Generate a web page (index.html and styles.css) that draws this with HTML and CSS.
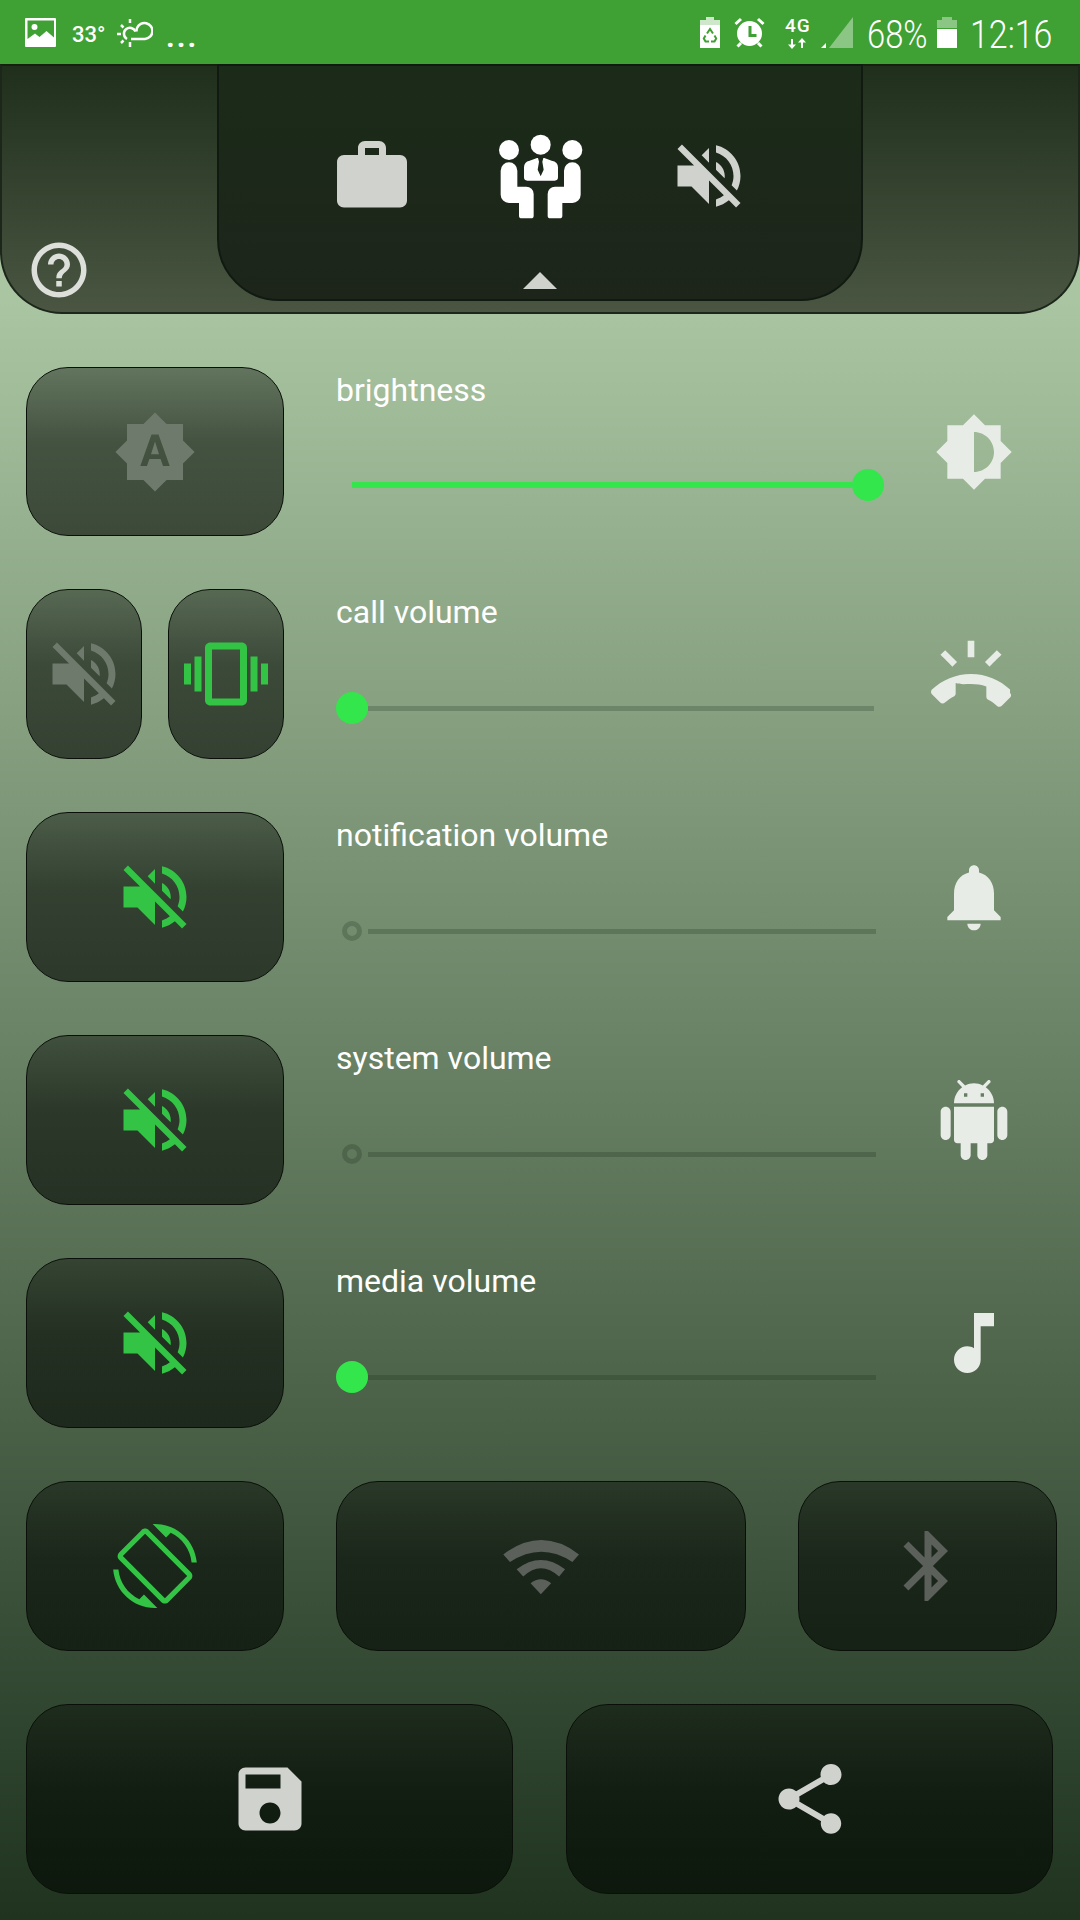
FILE: index.html
```html
<!DOCTYPE html>
<html lang="en">
<head>
  <meta charset="UTF-8">
  <meta name="viewport" content="width=device-width, initial-scale=1.0">
  <title>Sound profiles</title>
  <link rel="stylesheet" href="styles.css">
</head>
<body>
  <!-- Status bar -->
  <div class="status-bar">
    <div class="status-left">
      <svg class="st-image" viewBox="0 0 31 29"><path fill="#fff" fill-rule="evenodd" d="M1 0h29a1 1 0 0 1 1 1v27a1 1 0 0 1-1 1H1a1 1 0 0 1-1-1V1a1 1 0 0 1 1-1zm1.500 2.500V21l7.500-5.500 4.500 3.500 7-6 7.500 6.500V2.500zM9.500 6a3 3 0 1 1 0 6 3 3 0 0 1 0-6z"/></svg>
      <span class="temp">33°</span>
      <svg class="st-weather" viewBox="0 0 36 28" fill="none" stroke="#fff" stroke-width="2.500"><path d="M14 20h14a8 8 0 1 0-8-11c-.5 1-.5 2-.5 3.500"/><path d="M18.500 12.500A6 6 0 1 0 10 20"/><path d="M13 0v4M13 23v5M0 15h4M4 6l2.500 2.500M6.500 21.500L4 24"/></svg>
      <span class="dots">...</span>
    </div>
    <div class="status-right">
      <svg class="st-saver" viewBox="0 0 20 31"><path fill="#fff" fill-opacity=".75" d="M6 0h8v3h6v5H0V3h6z"/><path fill="#fff" d="M0 8h20v23H0z"/><g fill="none" stroke="#3fa033" stroke-width="2"><path d="M7 16.500l3-4.500 3 4.500"/><path d="M5.500 18.500L3.800 21.500l1.700 3h3.500"/><path d="M14.500 18.500l1.700 3-1.700 3H11"/></g></svg>
      <svg class="st-alarm" viewBox="0 0 31 31"><circle cx="15.500" cy="16.500" r="12.500" fill="#fff"/><g stroke="#fff" stroke-width="3" fill="none"><path d="M1.500 7L7 2M29.500 7L24 2M7 26l-3.500 3.500M24 26l3.500 3.500"/></g><path d="M14.500 9h3v8h5v3h-8z" fill="#3fa033"/></svg>
      <div class="st-net">
        <span class="net-label">4G</span>
        <svg class="net-arrows" viewBox="0 0 18 11"><path fill="#fff" d="M4 11L0 6.500h3V1h2v5.500h3zM14 0l4 4.500h-3V10h-2V4.500h-3z"/></svg>
      </div>
      <svg class="st-signal" viewBox="0 0 32 31"><path fill="#fff" fill-opacity=".4" d="M32 0v31H8z"/><path fill="#fff" d="M0 31l5-5v5z"/></svg>
      <span class="cond pct">68%</span>
      <svg class="st-battery" viewBox="0 0 20 31"><path fill="#fff" fill-opacity=".4" d="M5 0h10v3h5v8H0V3h5z"/><path fill="#fff" d="M0 12h20v19H0z"/></svg>
      <span class="cond clock">12:16</span>
    </div>
  </div>

  <!-- Profile header -->
  <div class="header">
    <svg class="help-icon" viewBox="0 0 24 24"><path d="M11 18h2v-2h-2v2zm1-16C6.480 2 2 6.480 2 12s4.480 10 10 10 10-4.480 10-10S17.520 2 12 2zm0 18c-4.410 0-8-3.590-8-8s3.590-8 8-8 8 3.590 8 8-3.590 8-8 8zm0-14c-2.210 0-4 1.790-4 4h2c0-1.100.9-2 2-2s2 .9 2 2c0 2-3 1.750-3 5h2c0-2.250 3-2.500 3-5 0-2.210-1.790-4-4-4z"/></svg>
    <div class="profile-tab">
      <div class="profile-icons">
        <svg class="profile-icon dim" viewBox="0 0 24 24"><path d="M20 6h-4V4c0-1.110-.89-2-2-2h-4c-1.110 0-2 .89-2 2v2H4c-1.110 0-1.990.89-1.990 2L2 19c0 1.110.89 2 2 2h16c1.110 0 2-.89 2-2V8c0-1.110-.89-2-2-2zm-6 0h-4V4h4v2z"/></svg>
        <svg class="meeting-icon" viewBox="85 25 255 255"><g fill="#fff">
          <circle cx="118" cy="73" r="30"/><circle cx="308" cy="73" r="30"/><circle cx="213" cy="57" r="30"/>
          <path d="M93 135a25 25 0 0 1 50 0v48h27a22 22 0 0 1 22 22v65a8 8 0 0 1-8 8h-28a8 8 0 0 1-8-8v-38h-30a25 25 0 0 1-25-25z"/>
          <path d="M333 135a25 25 0 0 0-50 0v48h-27a22 22 0 0 0-22 22v65a8 8 0 0 0 8 8h28a8 8 0 0 0 8-8v-38h30a25 25 0 0 0 25-25z"/>
          <path d="M163 155v-30q0-17 17-20l22-8h22l22 8q19 3 19 20v30q0 10-10 10h-82q-10 0-10-10z"/>
        </g><path fill="#1c291a" d="M205 97h16l-3 11 4 24-9 20-9-20 4-24z"/></svg>
        <svg class="profile-icon dim" viewBox="0 0 24 24"><use href="#mute"/></svg>
      </div>
      <div class="tab-arrow"></div>
    </div>
  </div>

  <svg class="defs"><defs><path id="mute" d="M16.500 12c0-1.770-1.020-3.290-2.500-4.030v2.210l2.450 2.450c.03-.2.050-.41.050-.63zm2.500 0c0 .94-.2 1.820-.54 2.640l1.510 1.510C20.630 14.910 21 13.500 21 12c0-4.280-2.990-7.860-7-8.770v2.060c2.890.86 5 3.540 5 6.710zM4.270 3L3 4.270 7.730 9H3v6h4l5 5v-6.730l4.250 4.250c-.67.52-1.420.93-2.250 1.180v2.060c1.380-.31 2.630-.95 3.690-1.810L19.730 21 21 19.730l-9-9L4.270 3zM12 4L9.910 6.090 12 8.180V4z"/></defs></svg>

  <div class="controls">
    <!-- Brightness -->
    <div class="row">
      <div class="btn-group">
        <div class="btn"><svg class="icon grey" viewBox="0 0 24 24"><path d="M10.850 12.650h2.300L12 9l-1.150 3.650zM20 8.690V4h-4.690L12 .69 8.690 4H4v4.690L.69 12 4 15.310V20h4.690L12 23.310 15.310 20H20v-4.690L23.310 12 20 8.690zM14.300 16l-.7-2h-3.200l-.7 2H7.800L11 7h2l3.200 9h-1.900z"/></svg></div>
      </div>
      <div class="slider-col">
        <div class="label">brightness</div>
        <div class="slider full">
          <div class="fill"></div>
          <div class="thumb"></div>
        </div>
      </div>
      <svg class="side-icon" viewBox="0 0 24 24"><path d="M20 15.310L23.310 12 20 8.690V4h-4.690L12 .69 8.690 4H4v4.690L.69 12 4 15.310V20h4.690L12 23.310 15.310 20H20v-4.690zM12 18V6c3.310 0 6 2.690 6 6s-2.690 6-6 6z"/></svg>
    </div>

    <!-- Call volume -->
    <div class="row">
      <div class="btn-group">
        <div class="btn"><svg class="icon grey" viewBox="0 0 24 24"><use href="#mute"/></svg></div>
        <div class="btn"><svg class="icon green" viewBox="0 0 24 24"><path d="M0 15h2V9H0v6zm3 2h2V7H3v10zm19-8v6h2V9h-2zm-3 8h2V7h-2v10zM16.500 3h-9C6.670 3 6 3.670 6 4.500v15c0 .83.67 1.500 1.500 1.500h9c.83 0 1.500-.67 1.500-1.500v-15c0-.83-.67-1.500-1.500-1.500zM16 19H8V5h8v14z"/></svg></div>
      </div>
      <div class="slider-col">
        <div class="label">call volume</div>
        <div class="slider">
          <div class="thumb"></div>
          <div class="track"></div>
        </div>
      </div>
      <svg class="side-icon shift" viewBox="0 0 24 24"><path d="M23.710 16.670C20.660 13.780 16.540 12 12 12 7.460 12 3.340 13.780.29 16.670c-.18.18-.29.43-.29.71 0 .28.11.53.29.71l2.480 2.480c.18.18.43.29.71.29.27 0 .52-.11.7-.28.79-.74 1.690-1.360 2.660-1.850.33-.16.56-.5.56-.9v-3.100C8.850 15.250 10.400 15 12 15c1.600 0 3.150.25 4.600.72v3.100c0 .39.23.74.56.9.98.49 1.870 1.120 2.670 1.850.18.18.43.28.7.28.28 0 .53-.11.71-.29l2.480-2.480c.18-.18.29-.43.29-.71 0-.28-.12-.52-.3-.7zM21.160 6.260l-1.410-1.410-3.560 3.550 1.410 1.410s3.450-3.520 3.560-3.550zM13 2h-2v5h2V2zM6.400 9.810L7.810 8.400 4.260 4.840 2.840 6.260c.11.03 3.560 3.550 3.560 3.550z"/></svg>
    </div>

    <!-- Notification volume -->
    <div class="row">
      <div class="btn-group">
        <div class="btn"><svg class="icon green" viewBox="0 0 24 24"><use href="#mute"/></svg></div>
      </div>
      <div class="slider-col">
        <div class="label">notification volume</div>
        <div class="slider muted">
          <div class="ring"></div>
          <div class="track"></div>
        </div>
      </div>
      <svg class="side-icon" viewBox="0 0 24 24"><path d="M12 22c1.100 0 2-.9 2-2h-4c0 1.100.9 2 2 2zm6-6v-5c0-3.070-1.630-5.640-4.500-6.320V4c0-.83-.67-1.500-1.500-1.500s-1.500.67-1.500 1.500v.68C7.640 5.360 6 7.920 6 11v5l-2 2v1h16v-1l-2-2z"/></svg>
    </div>

    <!-- System volume -->
    <div class="row">
      <div class="btn-group">
        <div class="btn"><svg class="icon green" viewBox="0 0 24 24"><use href="#mute"/></svg></div>
      </div>
      <div class="slider-col">
        <div class="label">system volume</div>
        <div class="slider muted">
          <div class="ring"></div>
          <div class="track"></div>
        </div>
      </div>
      <svg class="side-icon" viewBox="0 0 24 24"><path d="M6 18c0 .55.45 1 1 1h1v3.500c0 .83.67 1.500 1.500 1.500s1.500-.67 1.500-1.500V19h2v3.500c0 .83.67 1.500 1.500 1.500s1.500-.67 1.500-1.500V19h1c.55 0 1-.45 1-1V8H6v10zM3.500 8C2.670 8 2 8.670 2 9.500v7c0 .83.67 1.500 1.500 1.500S5 17.330 5 16.500v-7C5 8.670 4.330 8 3.500 8zm17 0c-.83 0-1.500.67-1.500 1.500v7c0 .83.67 1.500 1.500 1.500s1.500-.67 1.500-1.500v-7c0-.83-.67-1.500-1.500-1.500zm-4.970-5.840l1.300-1.300c.2-.2.2-.51 0-.71-.2-.2-.51-.2-.71 0l-1.480 1.480C13.850 1.230 12.950 1 12 1c-.96 0-1.860.23-2.660.63L7.850.15c-.2-.2-.51-.2-.71 0-.2.2-.2.51 0 .71l1.310 1.310C6.970 3.260 6 5.010 6 7h12c0-1.990-.97-3.750-2.470-4.840zM10 5H9V4h1v1zm5 0h-1V4h1v1z"/></svg>
    </div>

    <!-- Media volume -->
    <div class="row">
      <div class="btn-group">
        <div class="btn"><svg class="icon green" viewBox="0 0 24 24"><use href="#mute"/></svg></div>
      </div>
      <div class="slider-col">
        <div class="label">media volume</div>
        <div class="slider media">
          <div class="thumb"></div>
          <div class="track"></div>
        </div>
      </div>
      <svg class="side-icon" viewBox="0 0 24 24"><path d="M12 3v10.550c-.59-.34-1.270-.55-2-.55-2.210 0-4 1.790-4 4s1.790 4 4 4 4-1.790 4-4V7h4V3h-6z"/></svg>
    </div>

    <!-- Toggles -->
    <div class="toggles">
      <div class="btn"><svg class="icon green" viewBox="0 0 24 24"><path d="M16.480 2.520c3.270 1.550 5.610 4.720 5.970 8.480h1.500C23.440 4.840 18.290 0 12 0l-.66.03 3.810 3.810 1.330-1.320zm-6.250-.77c-.59-.59-1.540-.59-2.120 0L1.750 8.110c-.59.59-.59 1.540 0 2.120l12.020 12.020c.59.59 1.540.59 2.120 0l6.360-6.360c.59-.59.59-1.540 0-2.120L10.230 1.750zm4.600 19.440L2.810 9.170l6.360-6.360 12.020 12.020-6.360 6.360zm-7.310.29C4.250 19.940 1.910 16.760 1.550 13H.05C.56 19.160 5.710 24 12 24l.66-.03-3.810-3.810-1.330 1.320z"/></svg></div>
      <div class="btn"><svg class="wifi-icon" viewBox="60 50 250 180"><path d="M70 105Q185 19 298 105L278 128Q185 66 90 128z"/><path d="M110 150Q183 94 256 150L238 172Q183 122 130 172z"/><path d="M152 192Q183 168 214 192L183 225z"/></svg></div>
      <div class="btn"><svg class="icon grey-strong" viewBox="0 0 24 24"><path d="M17.710 7.710L12 2h-1v7.590L6.410 5 5 6.410 10.590 12 5 17.590 6.410 19 11 14.410V22h1l5.710-5.710-4.300-4.290 4.300-4.290zM13 5.830l1.880 1.880L13 9.590V5.830zm1.880 10.460L13 18.170v-3.760l1.880 1.880z"/></svg></div>
    </div>

    <!-- Save and share -->
    <div class="actions">
      <div class="btn"><svg class="icon light" viewBox="0 0 24 24"><path d="M17 3H5c-1.110 0-2 .9-2 2v14c0 1.100.89 2 2 2h14c1.100 0 2-.9 2-2V7l-4-4zm-5 16c-1.660 0-3-1.340-3-3s1.340-3 3-3 3 1.340 3 3-1.340 3-3 3zm3-10H5V5h10v4z"/></svg></div>
      <div class="btn"><svg class="icon light" viewBox="0 0 24 24"><path d="M18 16.080c-.76 0-1.440.3-1.960.77L8.910 12.700c.05-.23.09-.46.09-.7s-.04-.47-.09-.7l7.050-4.110c.54.5 1.250.81 2.040.81 1.660 0 3-1.340 3-3s-1.340-3-3-3-3 1.340-3 3c0 .24.04.47.09.7L8.040 9.810C7.500 9.310 6.790 9 6 9c-1.660 0-3 1.340-3 3s1.340 3 3 3c.79 0 1.500-.31 2.040-.81l7.120 4.160c-.05.21-.08.43-.08.65 0 1.610 1.310 2.920 2.920 2.920 1.610 0 2.920-1.310 2.920-2.920s-1.310-2.920-2.920-2.920z"/></svg></div>
    </div>
  </div>
</body>
</html>
```

FILE: styles.css
```css
* {
  box-sizing: border-box;
}

body {
  margin: 0;
  width: 1080px;
  height: 1920px;
  overflow: hidden;
  font-family: Roboto, sans-serif;
  color: #fff;
  background: linear-gradient(#a9c5a1 300px, #1f331f 1920px);
}

.defs {
  display: none;
}

/* Status bar */
.status-bar {
  height: 64px;
  background-color: #3fa033;
  display: flex;
  justify-content: space-between;
  padding: 17px 28px 0 25px;
}

.status-left,
.status-right {
  display: flex;
  align-items: flex-start;
}

.st-image {
  width: 31px;
  height: 29px;
  margin-top: 1px;
}

.temp {
  font-size: 22px;
  font-weight: 500;
  margin: 5px 0 0 16px;
  width: 45px;
}

.st-weather {
  width: 36px;
  height: 28px;
  margin-top: 2px;
}

.dots {
  font-size: 30px;
  font-weight: 700;
  line-height: 30px;
  letter-spacing: 2px;
  margin: 5px 0 0 13px;
}

.st-saver {
  width: 20px;
  height: 31px;
}

.st-alarm {
  width: 31px;
  height: 31px;
  margin-left: 14px;
}

.st-net {
  width: 26px;
  margin-left: 20px;
}

.net-label {
  display: block;
  font-size: 19px;
  font-weight: 500;
  letter-spacing: 1px;
  line-height: 17px;
}

.net-arrows {
  display: block;
  width: 18px;
  height: 11px;
  margin: 4px 0 0 3px;
}

.st-signal {
  width: 32px;
  height: 31px;
  margin-left: 10px;
}

/* Condensed text: no condensed face is installed, so squeeze Roboto */
.cond {
  font-size: 39px;
  font-weight: 300;
  line-height: 36px;
  white-space: nowrap;
  transform-origin: left;
}

.pct {
  width: 60px;
  margin-left: 14px;
  transform: scaleX(.84);
}

.st-battery {
  width: 20px;
  height: 31px;
  margin-left: 10px;
}

.clock {
  width: 82px;
  margin-left: 13px;
  transform: scaleX(.87);
}

/* Profile header */
.header {
  height: 250px;
  display: flex;
  justify-content: center;
  position: relative;
  background: linear-gradient(#1f2f1c, #4a5642);
  border: 2px solid #1c261a;
  border-top-color: #16200f;
  border-radius: 0 0 62px 62px;
}

.help-icon {
  position: absolute;
  left: 24px;
  top: 171px;
  width: 66px;
  height: 66px;
  fill: #dcdfda;
}

.profile-tab {
  width: 646px;
  height: 237px;
  margin-top: -2px;
  padding-top: 65px;
  display: flex;
  flex-direction: column;
  align-items: center;
  background: linear-gradient(#1b2b19, #1d251b);
  border: 2px solid #111a10;
  border-radius: 0 0 62px 62px;
}

.profile-icons {
  display: flex;
  align-items: center;
  gap: 84px;
  height: 90px;
}

.profile-icon {
  width: 84px;
  height: 84px;
}

.dim {
  fill: #d0d2ce;
}

.meeting-icon {
  width: 85px;
  height: 85px;
}

.tab-arrow {
  width: 0;
  height: 0;
  margin-top: 51px;
  border-left: 17px solid transparent;
  border-right: 17px solid transparent;
  border-bottom: 17px solid #d0d2ce;
}

/* Controls */
.controls {
  padding: 53px 0 0 26px;
  display: flex;
  flex-direction: column;
  gap: 53px;
}

.row {
  display: flex;
  height: 170px;
}

.row:first-child {
  height: 169px;
}

.btn-group {
  width: 258px;
  display: flex;
  gap: 26px;
}

.btn {
  flex: 1;
  display: flex;
  align-items: center;
  justify-content: center;
  border: 1.5px solid #0a0f09;
  border-radius: 42px;
  background: linear-gradient(rgba(0, 5, 0, .4), rgba(0, 5, 0, .57) 45%, rgba(0, 5, 0, .6));
}

.icon {
  width: 84px;
  height: 84px;
}

.grey {
  fill: #6d7a6c;
}

.green {
  fill: #33c445;
}

.grey-strong {
  fill: #5c605b;
}

.light {
  fill: #d0d2ce;
}

.slider-col {
  width: 558px;
  margin-left: 52px;
  display: flex;
  flex-direction: column;
  justify-content: space-between;
  padding-bottom: 35px;
}

.label {
  font-size: 32px;
  line-height: 36px;
  margin-top: 5px;
}

.slider {
  display: flex;
  align-items: center;
  height: 32px;
}

.slider.full {
  padding-left: 16px;
}

.fill {
  width: 500px;
  height: 6px;
  background-color: #33e64c;
}

.thumb {
  flex: none;
  width: 32px;
  height: 32px;
  border-radius: 50%;
  background-color: #33e64c;
}

.track {
  width: 506px;
  height: 5px;
  background-color: rgba(20, 35, 20, .22);
}

.media .track {
  width: 508px;
}

.slider.muted {
  padding-left: 6px;
}

.ring {
  flex: none;
  width: 20px;
  height: 20px;
  margin-right: 6px;
  border: 5px solid rgba(20, 35, 20, .22);
  border-radius: 50%;
}

.muted .track {
  width: 508px;
}

.side-icon {
  flex: none;
  width: 80px;
  height: 80px;
  margin: 45px 0 0 40px;
  fill: #e8ece6;
}

.shift {
  margin-left: 37px;
}

/* Bottom buttons */
.toggles {
  display: flex;
  gap: 52px;
  height: 170px;
}

.toggles .btn:nth-child(1) {
  flex: none;
  width: 258px;
}

.toggles .btn:nth-child(2) {
  flex: none;
  width: 410px;
}

.toggles .btn:nth-child(3) {
  flex: none;
  width: 259px;
}

.wifi-icon {
  width: 83px;
  height: 60px;
  fill: #5c605b;
}

.actions {
  display: flex;
  gap: 53px;
  height: 190px;
}

.actions .btn {
  flex: none;
  width: 487px;
}
```
